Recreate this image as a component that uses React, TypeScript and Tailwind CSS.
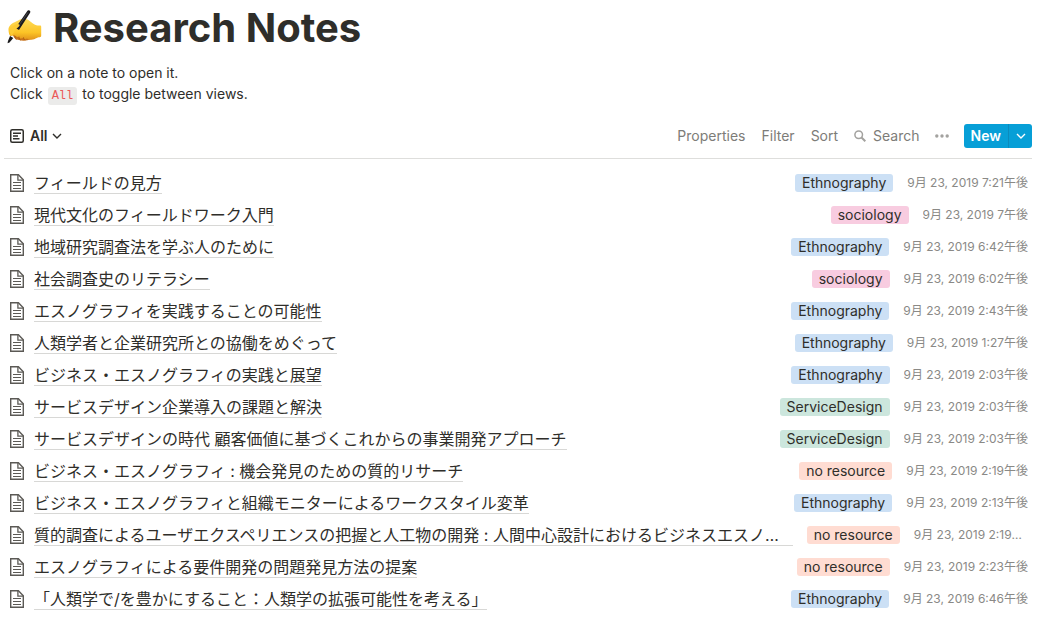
type TagName = 'Ethnography' | 'sociology' | 'ServiceDesign' | 'no resource';

interface Note {
  title: string;
  tag: TagName;
  date: string;
}

const TAG_COLORS: Record<TagName, string> = {
  Ethnography: 'bg-[#cce0f5]',
  sociology: 'bg-[#f8cce0]',
  ServiceDesign: 'bg-[#cce6dd]',
  'no resource': 'bg-[#ffdcd2]',
};

const NOTES: Note[] = [
  { title: 'フィールドの見方', tag: 'Ethnography', date: '9月 23, 2019 7:21午後' },
  { title: '現代文化のフィールドワーク入門', tag: 'sociology', date: '9月 23, 2019 7午後' },
  { title: '地域研究調査法を学ぶ人のために', tag: 'Ethnography', date: '9月 23, 2019 6:42午後' },
  { title: '社会調査史のリテラシー', tag: 'sociology', date: '9月 23, 2019 6:02午後' },
  { title: 'エスノグラフィを実践することの可能性', tag: 'Ethnography', date: '9月 23, 2019 2:43午後' },
  { title: '人類学者と企業研究所との協働をめぐって', tag: 'Ethnography', date: '9月 23, 2019 1:27午後' },
  { title: 'ビジネス・エスノグラフィの実践と展望', tag: 'Ethnography', date: '9月 23, 2019 2:03午後' },
  { title: 'サービスデザイン企業導入の課題と解決', tag: 'ServiceDesign', date: '9月 23, 2019 2:03午後' },
  {
    title: 'サービスデザインの時代 顧客価値に基づくこれからの事業開発アプローチ',
    tag: 'ServiceDesign',
    date: '9月 23, 2019 2:03午後',
  },
  { title: 'ビジネス・エスノグラフィ : 機会発見のための質的リサーチ', tag: 'no resource', date: '9月 23, 2019 2:19午後' },
  { title: 'ビジネス・エスノグラフィと組織モニターによるワークスタイル変革', tag: 'Ethnography', date: '9月 23, 2019 2:13午後' },
  {
    title: '質的調査によるユーザエクスペリエンスの把握と人工物の開発 : 人間中心設計におけるビジネスエスノグラフィの',
    tag: 'no resource',
    date: '9月 23, 2019 2:19午後',
  },
  { title: 'エスノグラフィによる要件開発の問題発見方法の提案', tag: 'no resource', date: '9月 23, 2019 2:23午後' },
  { title: '「人類学で/を豊かにすること：人類学の拡張可能性を考える」', tag: 'Ethnography', date: '9月 23, 2019 6:46午後' },
];

function WritingHand() {
  return (
    <svg width="36" height="36" viewBox="0 0 36 36" aria-hidden="true">
      <defs>
        <linearGradient id="skin" x1="0" y1="0" x2="0" y2="1">
          <stop offset="0" stopColor="#ffdc5a" />
          <stop offset="0.65" stopColor="#fcc426" />
          <stop offset="1" stopColor="#e2931a" />
        </linearGradient>
      </defs>
      <path d="M5 23c1 4 4 7 7 7 4 1.200 8 .8 12-1l-2-5z" fill="#c9741a" />
      <path
        d="M1.500 20C1.300 16.500 4 14 7 12.500l6-3c2-.9 5-1 7-.2 3 1 5 4.500 8 5.500 2 .7 3.500.8 5 .8.800 0 1.200.5 1.200 1.400v8.600c0 1-.5 1.500-1.500 1.600-3 .1-4 2-8.200 2.600-2 .2-3.500-.3-4.500-1.200-1.500.9-3.500.8-4.500-.5-1.500.7-3.300.2-4-1.200-1.500.3-3-.2-3.500-1.600L3.500 26c-1.500-1-1.800-3.500-2-6z"
        fill="url(#skin)"
      />
      <path
        d="M8 26.500c-.2 1.200.3 2.200 1.200 3M12 27c0 1.500.4 2.300 1.300 3M16.500 27.800c0 1 .5 1.700 1.200 2.300"
        fill="none"
        stroke="#a9570f"
        strokeWidth="0.900"
        strokeLinecap="round"
      />
      <path d="M20.300 1c.4-.8 1.300-1 2.200-.5.900.5 1.100 1.400.6 2.200L12 20l-3.500-2z" fill="#1b1b1d" />
      <path d="M3 26l3.300 2L2.500 32.500l-2 .8.500-2.300z" fill="#1b1b1d" />
      <path d="M20.900 2.500 11.500 16" stroke="#55555a" strokeWidth="0.700" />
      <path d="M2.500 20.500c1.500-3.500 4.500-6 8-6.500 2-.2 2.800 1.500 1.400 2.600L8 20c-1 2.500-2 4.500-4 5.500z" fill="#fdcb34" />
    </svg>
  );
}

function ViewIcon() {
  return (
    <svg width="14" height="14" viewBox="0 0 14 14" fill="none" stroke="currentColor" strokeWidth="1.500">
      <rect x="0.750" y="0.750" width="12.500" height="12.500" rx="1.500" />
      <path d="M3 4.250h8M3 7h5M3 9.750h6.500" />
    </svg>
  );
}

function ChevronIcon() {
  return (
    <svg width="10" height="10" viewBox="0 0 10 10" fill="none">
      <path d="M1 3l4 4 4-4" stroke="currentColor" strokeWidth="1.400" />
    </svg>
  );
}

function SearchIcon() {
  return (
    <svg width="12" height="12" viewBox="0 0 12 12" fill="none" stroke="#a3a29f">
      <circle cx="4.700" cy="4.700" r="3.800" strokeWidth="1.500" />
      <path d="M7.500 7.500l3.800 3.800" strokeWidth="2" />
    </svg>
  );
}

function MoreIcon() {
  return (
    <svg width="14" height="4" viewBox="0 0 14 4" fill="#a3a29f">
      <circle cx="1.800" cy="2" r="1.700" />
      <circle cx="7" cy="2" r="1.700" />
      <circle cx="12.200" cy="2" r="1.700" />
    </svg>
  );
}

function PageIcon() {
  return (
    <svg width="14" height="18" viewBox="0 0 14 18" fill="none" stroke="#5b5955" className="shrink-0">
      <path d="M.700.700h7.700l4.900 5v11.600H.700z" strokeWidth="1.400" />
      <path d="M7.900.800v5.400h5.300" strokeWidth="1.300" />
      <path d="M3 8.500h8M3 11.500h8M3 14.500h8" strokeWidth="1.200" />
    </svg>
  );
}

function NoteRow({ title, tag, date }: Note) {
  return (
    <li className="flex h-8 items-center gap-3.5 pr-1 pl-1.5">
      <div className="flex min-w-0 items-center gap-2.5">
        <PageIcon />
        <a href="#" className="min-w-0 truncate border-b border-[#d8d8d6] text-base leading-5">
          {title}
        </a>
      </div>
      <span className={`ml-auto shrink-0 rounded-[3px] px-[7px] text-sm leading-[18px] ${TAG_COLORS[tag]}`}>
        {tag}
      </span>
      <span className="min-w-0 truncate text-xs leading-[18px] text-[#8a8986]">{date}</span>
    </li>
  );
}

export default function App() {
  return (
    <main className="min-h-screen bg-white pt-1 pr-[23px] pl-1 font-['Inter','Noto_Sans_CJK_JP',sans-serif] text-[#2f2e2a]">
      <header>
        <div className="flex items-center gap-2.5 pl-[3px]">
          <WritingHand />
          <h1 className="text-[40px] leading-[48px] font-bold">Research Notes</h1>
        </div>
        <div className="mt-2.5 pl-1.5 text-sm leading-[21px]">
          <p>Click on a note to open it.</p>
          <p>
            Click{' '}
            <code className="mx-px rounded-[3px] bg-[#ebebea] px-1 py-0.5 font-['Liberation_Mono',monospace] text-xs text-[#eb5757]">
              All
            </code>{' '}
            to toggle between views.
          </p>
        </div>
      </header>

      <div className="mt-[9px] flex h-[46px] items-center border-b border-[#dededc] pl-1.5">
        <button type="button" className="flex items-center gap-1.5 text-sm font-semibold">
          <ViewIcon />
          <span className="flex items-center gap-1">
            All
            <ChevronIcon />
          </span>
        </button>
        <div className="ml-auto flex items-center gap-[15px] text-sm text-[#7d7c78]">
          <div className="flex items-center gap-4">
            <button type="button">Properties</button>
            <button type="button">Filter</button>
            <button type="button">Sort</button>
            <button type="button" className="flex items-center gap-[7px]">
              <SearchIcon />
              Search
            </button>
          </div>
          <button type="button" aria-label="More">
            <MoreIcon />
          </button>
          <div className="flex h-6 overflow-hidden rounded-[3px] bg-[#079fd7] text-white">
            <button type="button" className="px-[7px] font-semibold">
              New
            </button>
            <button
              type="button"
              aria-label="New from template"
              className="flex w-6 items-center justify-center border-l border-[#0b8bbd]"
            >
              <ChevronIcon />
            </button>
          </div>
        </div>
      </div>

      <ul className="pt-2">
        {NOTES.map((note) => (
          <NoteRow key={note.title} {...note} />
        ))}
      </ul>
    </main>
  );
}
